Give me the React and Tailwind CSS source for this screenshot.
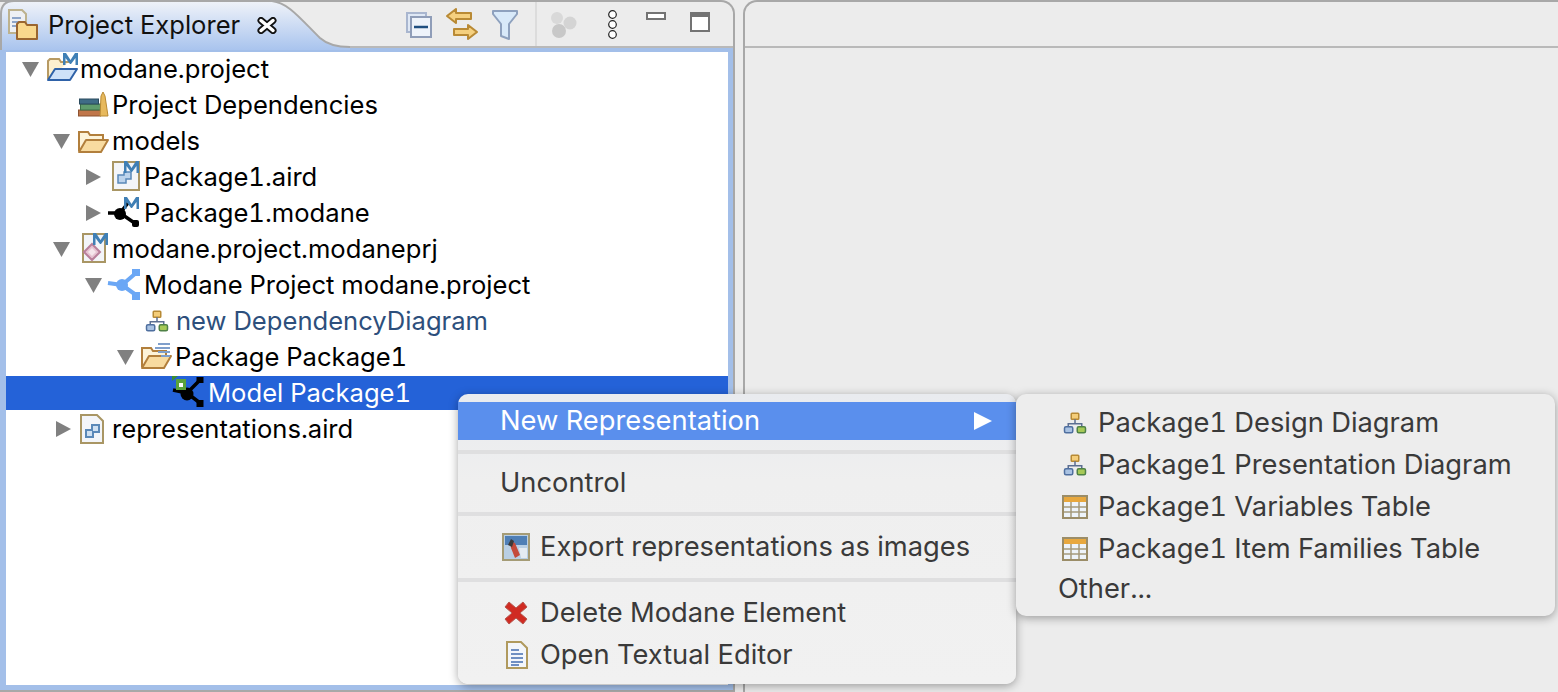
import React from "react";

const font = "font-['Inter','Liberation_Sans',sans-serif]";

function Svg({ className = "w-8", children }) {
  return (
    <svg viewBox="0 0 32 32" className={`h-8 shrink-0 overflow-visible ${className}`} fill="none">
      {children}
    </svg>
  );
}

function MBadge({ x = 0 }) {
  return (
    <path
      transform={`translate(${x} 0)`}
      d="M14 12V0h3l4.500 7L26 0h3v12h-2.500V5L22 11h-1L16.500 5v7z"
      fill="#3f7fb5"
    />
  );
}

function FolderOpen() {
  return (
    <>
      <path d="M1 26V7h9l2 3h13v6" fill="#fdf3d8" stroke="#b27f3c" strokeWidth="2" />
      <path d="M1 27l7-12h22l-7 12z" fill="#f8dba0" stroke="#b27f3c" strokeWidth="2" strokeLinejoin="round" />
    </>
  );
}

function ProjectFolder() {
  return (
    <Svg className="w-[34px]">
      <path d="M2 26V8l2-2h9l2 3h8" fill="#fdf0cf" stroke="#b79a63" strokeWidth="2" />
      <path d="M2 27l7-11h22l-7 11z" fill="#cfe2f8" stroke="#2f62a8" strokeWidth="2" strokeLinejoin="round" />
      <MBadge x={3} />
    </Svg>
  );
}

function Books() {
  return (
    <Svg>
      <rect x="0.500" y="21" width="22" height="6" fill="#c0764a" stroke="#8d5231" />
      <rect x="2.500" y="15" width="20" height="6" fill="#5f9c6c" stroke="#3c6f49" />
      <rect x="1.500" y="10" width="19" height="5" fill="#3f6c86" stroke="#2b4a5e" />
      <path d="M22 27l1-20 2-4 2 4 3 20z" fill="#e7b95d" stroke="#b98a33" />
    </Svg>
  );
}

function ModelNode() {
  return (
    <Svg>
      <path d="M1 16h12M13 16l8-10M13 16l16 11" stroke="#000" strokeWidth="3.500" />
      <circle cx="13" cy="17" r="6" fill="#000" />
      <rect x="25" y="23" width="7" height="7" rx="2" fill="#000" />
      <MBadge x={3} />
    </Svg>
  );
}

function ModelSelected() {
  return (
    <Svg>
      <path d="M15 16l13-13M15 16l13 10M1 13l14 3" stroke="#000" strokeWidth="3.500" />
      <circle cx="15" cy="17" r="6.500" fill="#000" />
      <rect x="24.500" y="0" width="7" height="6" fill="#000" />
      <rect x="24.500" y="23" width="7" height="7" fill="#000" />
      <rect x="4" y="2" width="10" height="11" fill="#5aa23b" />
      <rect x="7" y="6" width="4" height="4" fill="#fff" />
      <path d="M0 -1h6L0 4z" fill="#3e8f2f" />
    </Svg>
  );
}

function DocM({ x1, x2, mx, children }) {
  return (
    <Svg>
      <path d={`M${x1} 1H${x2}V29H${x1}z`} fill="#f3f5f9" stroke="#a99664" strokeWidth="2" />
      {children}
      <MBadge x={mx} />
    </Svg>
  );
}

function DiagramIcon() {
  return (
    <Svg className="w-6 !h-6">
      <rect x="11" y="3" width="10" height="8" rx="1" fill="#f4cd79" stroke="#b78a35" strokeWidth="2" />
      <path d="M16 11v6M7 22v-5h18v5" stroke="#5c6f92" strokeWidth="2" />
      <rect x="2" y="21" width="11" height="8" rx="2" fill="#a9c2e2" stroke="#4f6f9f" strokeWidth="2" />
      <rect x="19" y="21" width="11" height="8" rx="2" fill="#a6c957" stroke="#4f8146" strokeWidth="2" />
    </Svg>
  );
}

function TableIcon() {
  return (
    <svg viewBox="0 0 26 24" className="w-[26px] h-6 shrink-0" fill="none">
      <rect x="1" y="1" width="24" height="22" fill="#eef4fa" stroke="#9b8d68" strokeWidth="2" />
      <rect x="2" y="2" width="22" height="5" fill="#e8a83e" />
      <path d="M9 7v15M17 7v15M2 12h22M2 17h22" stroke="#a59a7c" strokeWidth="1.500" />
    </svg>
  );
}

function Arrow({ open }) {
  return (
    <span className="w-4 h-4 shrink-0 flex items-center justify-center">
      {open ? (
        <svg viewBox="0 0 17 15" className="w-[17px] h-[15px] shrink-0">
          <path d="M0 0h17L8.500 15z" fill="#808080" />
        </svg>
      ) : (
        <svg viewBox="0 0 15 16" className="w-[15px] h-4 shrink-0">
          <path d="M0 0l15 8-15 8z" fill="#808080" />
        </svg>
      )}
    </span>
  );
}

const rows = [
  { label: "modane.project", pad: "pl-[16px]", arrow: "open", icon: <ProjectFolder />, iconBox: "ml-[7px] mr-[2px]" },
  { label: "Project Dependencies", pad: "pl-[72px]", icon: <Books />, iconBox: "mr-[3px]" },
  { label: "models", pad: "pl-[47px]", arrow: "open", icon: <Svg><FolderOpen /></Svg>, iconBox: "ml-[9px] mr-[3px]" },
  { label: "Package1.aird", pad: "pl-[79px]", arrow: "closed", iconBox: "ml-[10px] mr-[2px]", icon: (
    <DocM x1={2} x2={28} mx={-1}>
      <path d="M7 14h6v-3h7v7h-5v4H7z" fill="#bcd3ec" stroke="#5a88b8" strokeWidth="1.500" />
    </DocM>
  ) },
  { label: "Package1.modane", pad: "pl-[79px]", arrow: "closed", iconBox: "ml-[6px] mr-[6px]", icon: <ModelNode /> },
  { label: "modane.project.modaneprj", pad: "pl-[47px]", arrow: "open", iconBox: "ml-[9px] mr-[3px]", icon: (
    <DocM x1={5} x2={27} mx={1}>
      <path d="M14 11l8 8-8 8-8-8z" fill="#e6c3d2" stroke="#b97f9b" strokeWidth="2" />
      <path d="M14 15l4 4-4 4-4-4z" fill="#f5e6ec" />
    </DocM>
  ) },
  { label: "Modane Project modane.project", pad: "pl-[79px]", arrow: "open", iconBox: "ml-[7px] mr-[5px]", icon: (
    <Svg>
      <path d="M0 14l14 2M14 16l14-12M14 16l14 10" stroke="#6ba7f5" strokeWidth="4" />
      <circle cx="14" cy="16" r="6" fill="#6ba7f5" />
      <rect x="24" y="0" width="8" height="7" fill="#6ba7f5" />
      <rect x="24" y="23" width="8" height="8" fill="#6ba7f5" />
    </Svg>
  ) },
  { label: "new DependencyDiagram", pad: "pl-[139px]", icon: <DiagramIcon />, blue: true, iconBox: "mr-[8px]" },
  { label: "Package Package1", pad: "pl-[111px]", arrow: "open", iconBox: "ml-[8px] mr-[3px]", icon: (
    <Svg>
      <FolderOpen />
      <path d="M17 3h12M14 7h15M17 11h12M20 15h9" stroke="#7f9fcb" strokeWidth="2" />
    </Svg>
  ) },
  { label: "Model Package1", pad: "pl-[166px]", icon: <ModelSelected />, selected: true, iconBox: "mr-[5px]" },
  { label: "representations.aird", pad: "pl-[49px]", arrow: "closed", iconBox: "ml-[5px] mr-[5px]", icon: (
    <Svg>
      <path d="M5 2h16l6 6v22H5z" fill="#f3f5f9" stroke="#a99664" strokeWidth="2" />
      <path d="M10 17h6v-5h7v7h-6v5h-7z" fill="#cfe0f2" stroke="#5a88b8" strokeWidth="2" />
    </Svg>
  ) },
];

function TreeRow({ row }) {
  const rowClass = row.selected ? "h-[34px] my-px bg-[#2462d8] text-white" : "h-9 text-black";
  return (
    <div className={`flex items-center ${row.pad} ${rowClass}`}>
      {row.arrow && <Arrow open={row.arrow === "open"} />}
      <span className={`${row.iconBox} flex items-center`}>{row.icon}</span>
      <span className={`-ml-px ${row.blue ? "text-[#2d4f7c]" : ""}`}>{row.label}</span>
    </div>
  );
}

function Toolbar() {
  return (
    <div className="flex items-start h-full ml-auto pr-[23px]">
      <svg viewBox="0 0 26 26" className="w-[26px] h-[26px] mt-[10px] mr-[14px]" fill="none">
        <rect x="1" y="1" width="19" height="19" fill="#dfe8f5" stroke="#a9b6cf" strokeWidth="2" />
        <rect x="5" y="5" width="20" height="20" fill="#eef3fa" stroke="#8f9db8" strokeWidth="2" />
        <path d="M8 15h14" stroke="#1f4f80" strokeWidth="2.500" />
      </svg>
      <svg viewBox="0 0 32 32" className="w-8 h-8 mt-[6px] mr-[14px]" fill="none">
        <path d="M1 8l9-7v4h15v6H10v4z" fill="#f5d07f" stroke="#b98a35" strokeWidth="2" strokeLinejoin="round" />
        <path d="M31 24l-9 7v-4H8v-6h14v-4z" fill="#f5d07f" stroke="#b98a35" strokeWidth="2" strokeLinejoin="round" />
      </svg>
      <svg viewBox="0 0 26 30" className="w-[26px] h-[30px] mt-2" fill="none">
        <path d="M1 1h24v3L17 14v15l-8-3V14L1 4z" fill="#d8e9f9" stroke="#8ea1be" strokeWidth="2" strokeLinejoin="round" />
      </svg>
      <span className="w-[2px] h-[44px] bg-[#dcdcdc] ml-[17px] mr-[13px]" />
      <svg viewBox="0 0 27 26" className="w-[27px] h-[26px] mt-[10px] mr-[31px]">
        <circle cx="7" cy="6" r="6" fill="#d9d9d9" />
        <circle cx="20" cy="11" r="6.500" fill="#d4d4d4" />
        <circle cx="9" cy="19" r="7" fill="#c8c8c8" />
      </svg>
      <svg viewBox="0 0 9 29" className="w-[9px] h-[29px] mt-2 mr-[29px] overflow-visible" fill="#fff">
        <circle cx="4.500" cy="4.500" r="3.800" stroke="#222" strokeWidth="1.200" />
        <circle cx="4.500" cy="14.500" r="3.800" stroke="#222" strokeWidth="1.200" />
        <circle cx="4.500" cy="24.500" r="3.800" stroke="#222" strokeWidth="1.200" />
      </svg>
      <span className="w-5 h-2 border-2 border-[#737373] bg-white mt-[10px] mr-6" />
      <span className="w-5 h-5 border-2 border-t-[5px] border-[#737373] bg-white mt-[10px]" />
    </div>
  );
}

function MenuRow({ icon, label, selected, indent }) {
  const rowClass = selected ? "h-[38px] bg-[#5a8fed] text-white" : "h-[42px] text-[#3a3a3a]";
  return (
    <div className={`flex items-center ${indent} ${rowClass}`}>
      {icon}
      <span className={icon ? "-ml-px" : ""}>{label}</span>
      {selected && (
        <svg viewBox="0 0 18 18" className="w-[18px] h-[18px] ml-auto mr-[24px]">
          <path d="M0 0l18 9-18 9z" fill="#fff" />
        </svg>
      )}
    </div>
  );
}

export default function App() {
  return (
    <div className={`relative w-[1558px] h-[692px] overflow-hidden bg-[#ececec] text-[25.600px] leading-none tabular-nums ${font}`}>
      <div className="flex h-full">
        {/* left view */}
        <div className="w-[735px] h-full flex flex-col border-t-2 border-r-2 border-b-2 border-[#a8a8a8] rounded-tr-[14px]">
          <div className="h-[44px] flex relative shrink-0">
            {/* tab shape */}
            <svg viewBox="0 0 350 50" className="absolute left-0 -top-[2px] w-[350px] h-[50px]" fill="none">
              <defs>
                <linearGradient id="tabFill" x1="0" y1="0" x2="0" y2="1">
                  <stop offset="0" stopColor="#f0f3f9" />
                  <stop offset="1" stopColor="#a9c4ee" />
                </linearGradient>
              </defs>
              <path d="M0 50V14Q0 1 14 1H272C288 3 298 16 320 38Q330 47 350 47V50z" fill="url(#tabFill)" />
              <path d="M1 50V14Q1 1 14 1H272C288 3 298 16 320 38Q330 47 350 47" stroke="#a8a8a8" strokeWidth="2" />
            </svg>
            <div className="relative flex items-center h-full pl-[7px] pt-[2px]">
              <svg viewBox="0 0 32 32" className="w-8 h-8 mr-[9px] shrink-0" fill="none">
                <path d="M2 1h13l4 4v19H2z" fill="#eef0f4" stroke="#bdb28e" strokeWidth="2" />
                <path d="M5 9h9M5 13h9M5 17h7" stroke="#8ea5c9" strokeWidth="2" />
                <path d="M10 30V15l2-2h6l2 3h10v14z" fill="#f9d88d" stroke="#9a6530" strokeWidth="2" strokeLinejoin="round" />
              </svg>
              <span className="text-[#111]">Project Explorer</span>
              <svg viewBox="0 0 20 17" className="w-5 h-[17px] ml-[17px]" fill="none">
                <path d="M4 3.500l12 10M16 3.500l-12 10" stroke="#111" strokeWidth="7" strokeLinecap="round" />
                <path d="M4 3.500l12 10M16 3.500l-12 10" stroke="#fff" strokeWidth="3.500" strokeLinecap="round" />
              </svg>
            </div>
            <Toolbar />
          </div>
          <div className="flex-1 min-h-0 border-t-2 border-[#b9b9b9]">
            <div className="h-full border-l-[6px] border-r-[5px] border-t-4 border-b-[5px] border-[#a3bfe9] bg-white">
              <div className="-mt-px">
                {rows.map((row) => (
                  <TreeRow key={row.label} row={row} />
                ))}
              </div>
            </div>
          </div>
        </div>

        {/* right view */}
        <div className="ml-2 flex-1 h-full border-t-2 border-l-2 border-[#a8a8a8] rounded-tl-[14px]">
          <div className="h-[46px] border-b-2 border-[#b9b9b9]" />
        </div>
      </div>

      {/* context menu */}
      <div className="absolute left-[458px] top-[394px] w-[558px] h-[290px] bg-gradient-to-b from-[#e9ebef] via-[#efefef] via-30% to-[#f1f1f1] rounded-[10px] shadow-[0_2px_10px_rgba(0,0,0,0.35)] pt-2 z-10 text-[27.300px]">
        <MenuRow selected indent="pl-[42px]" label="New Representation" />
        <div className="h-1 bg-[#dfdfe0] mt-[10px]" />
        <div className="mt-2"><MenuRow indent="pl-[42px]" label="Uncontrol" /></div>
        <div className="h-1 bg-[#dfdfe0] mt-2" />
        <div className="mt-[10px]">
          <MenuRow indent="pl-[44px]" label="Export representations as images" icon={
            <svg viewBox="0 0 28 28" className="w-7 h-7 mr-[11px] shrink-0">
              <rect x="1" y="1" width="26" height="26" fill="#b9cfe4" stroke="#a59c76" strokeWidth="2" />
              <path d="M3 3h22v9H3z" fill="#4f7fb5" />
              <path d="M8 8l5 2 5 12-5 3-4-10z" fill="#c44a3a" />
              <path d="M6 12l3-6 3 2-2 6z" fill="#3a3a3a" />
              <path d="M17 15h8v10h-6z" fill="#e4ebf2" />
            </svg>
          } />
        </div>
        <div className="h-1 bg-[#dfdfe0] mt-[10px]" />
        <div className="mt-[10px]">
          <MenuRow indent="pl-[46px]" label="Delete Modane Element" icon={
            <svg viewBox="0 0 24 24" className="w-6 h-6 mr-[13px] shrink-0">
              <path d="M1 6l4-5 7 6 7-6 4 5-7 6 7 6-4 5-7-6-7 6-4-5 7-6z" fill="#d02b22" stroke="#b5574f" strokeWidth="1" />
            </svg>
          } />
          <MenuRow indent="pl-[48px]" label="Open Textual Editor" icon={
            <svg viewBox="0 0 22 28" className="w-[22px] h-7 mr-[13px] shrink-0" fill="none">
              <path d="M1 1h14l6 6v20H1z" fill="#f3f6fb" stroke="#b09a5e" strokeWidth="2" />
              <path d="M5 9h8M5 13h12M5 17h12M5 21h12M5 24h8" stroke="#6f8fc2" strokeWidth="2" />
            </svg>
          } />
        </div>
      </div>

      {/* submenu */}
      <div className="absolute left-[1016px] top-[394px] w-[539px] h-[222px] bg-[#ededed] rounded-[10px] shadow-[0_2px_10px_rgba(0,0,0,0.35)] pt-2 z-20 text-[27.300px]">
        <MenuRow indent="pl-[47px]" label="Package1 Design Diagram" icon={<span className="mr-3"><DiagramIcon /></span>} />
        <MenuRow indent="pl-[47px]" label="Package1 Presentation Diagram" icon={<span className="mr-3"><DiagramIcon /></span>} />
        <MenuRow indent="pl-[46px]" label="Package1 Variables Table" icon={<span className="mr-[11px]"><TableIcon /></span>} />
        <MenuRow indent="pl-[46px]" label="Package1 Item Families Table" icon={<span className="mr-[11px]"><TableIcon /></span>} />
        <div className="-mt-[2px]"><MenuRow indent="pl-[42px]" label="Other..." /></div>
      </div>
    </div>
  );
}
